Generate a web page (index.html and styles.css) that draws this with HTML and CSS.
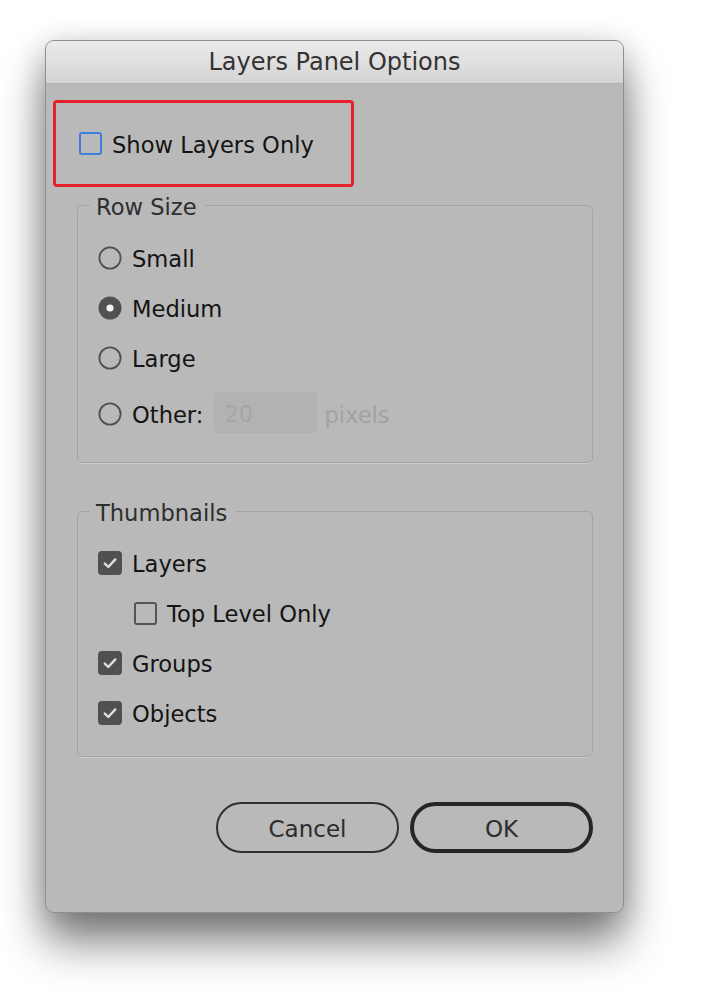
FILE: index.html
```html
<!DOCTYPE html>
<html>
<head>
<meta charset="utf-8">
<title>Layers Panel Options</title>
<link rel="stylesheet" href="styles.css">
</head>
<body>
<div class="dialog">
  <div class="titlebar">Layers Panel Options</div>
  <div class="content">
    <div class="highlight">
      <label class="option">
        <span class="box box-focus"></span>
        <span class="label">Show Layers Only</span>
      </label>
    </div>

    <div class="group group-rows">
      <div class="legend">Row Size</div>
      <div class="row">
        <svg class="radio" viewBox="0 0 24 24"><circle cx="12" cy="12" r="10.6" fill="none" stroke="#505050" stroke-width="1.8"/></svg>
        <span class="label">Small</span>
      </div>
      <div class="row">
        <svg class="radio" viewBox="0 0 24 24"><circle cx="12" cy="12" r="11.5" fill="#515151"/><circle cx="12" cy="12" r="3.6" fill="#f2f2f2"/></svg>
        <span class="label">Medium</span>
      </div>
      <div class="row">
        <svg class="radio" viewBox="0 0 24 24"><circle cx="12" cy="12" r="10.6" fill="none" stroke="#505050" stroke-width="1.8"/></svg>
        <span class="label">Large</span>
      </div>
      <div class="row row-other">
        <svg class="radio" viewBox="0 0 24 24"><circle cx="12" cy="12" r="10.6" fill="none" stroke="#505050" stroke-width="1.8"/></svg>
        <span class="label">Other:</span>
        <span class="field">20</span>
        <span class="unit">pixels</span>
      </div>
    </div>

    <div class="group group-thumbs">
      <div class="legend">Thumbnails</div>
      <div class="row">
        <svg class="check" viewBox="0 0 24 24"><rect x="0" y="0" width="24" height="24" rx="4" fill="#505050"/><path d="M6.8 12.6 L10.3 16 L17.3 8.4" fill="none" stroke="#dedede" stroke-width="2.4" stroke-linecap="round" stroke-linejoin="round"/></svg>
        <span class="label">Layers</span>
      </div>
      <div class="row row-indent">
        <span class="box"></span>
        <span class="label">Top Level Only</span>
      </div>
      <div class="row">
        <svg class="check" viewBox="0 0 24 24"><rect x="0" y="0" width="24" height="24" rx="4" fill="#505050"/><path d="M6.8 12.6 L10.3 16 L17.3 8.4" fill="none" stroke="#dedede" stroke-width="2.4" stroke-linecap="round" stroke-linejoin="round"/></svg>
        <span class="label">Groups</span>
      </div>
      <div class="row">
        <svg class="check" viewBox="0 0 24 24"><rect x="0" y="0" width="24" height="24" rx="4" fill="#505050"/><path d="M6.8 12.6 L10.3 16 L17.3 8.4" fill="none" stroke="#dedede" stroke-width="2.4" stroke-linecap="round" stroke-linejoin="round"/></svg>
        <span class="label">Objects</span>
      </div>
    </div>

    <div class="buttons">
      <button class="btn">Cancel</button>
      <button class="btn btn-default">OK</button>
    </div>
  </div>
</div>
</body>
</html>
```

FILE: styles.css
```css
* {
  box-sizing: border-box;
}

html, body {
  margin: 0;
  padding: 0;
}

body {
  width: 718px;
  height: 1004px;
  background: #ffffff;
  font-family: "DejaVu Sans", "Liberation Sans", sans-serif;
  overflow: hidden;
  padding-top: 40px;
  padding-left: 45px;
}

.dialog {
  width: 579px;
  height: 873px;
  background: #b9b9b9;
  border: 1px solid #8f8f8f;
  border-radius: 9px;
  overflow: hidden;
  box-shadow: 0 30px 45px rgba(0, 0, 0, 0.48), 0 6px 32px rgba(0, 0, 0, 0.2);
}

.titlebar {
  height: 43px;
  border-bottom: 1px solid #b4b4b4;
  background: linear-gradient(#ebebeb, #d4d4d4);
  display: flex;
  align-items: center;
  justify-content: center;
  font-size: 24px;
  color: #333333;
  padding-bottom: 1px;
}

.content {
  display: flex;
  flex-direction: column;
}

.highlight {
  margin: 16px 0 0 7px;
  width: 301px;
  height: 87px;
  border: 3px solid #e6212c;
  border-radius: 4px;
  display: flex;
  align-items: center;
  padding-left: 23px;
}

.option {
  display: flex;
  align-items: center;
}

.label {
  font-size: 22.6px;
  color: #141414;
  line-height: 26px;
  padding-top: 2px;
}

.box {
  width: 23px;
  height: 23px;
  border: 2px solid #555555;
  border-radius: 3px;
  margin-right: 10px;
  flex: none;
}

.box-focus {
  border-color: #3f7fdc;
}

.group {
  margin: 18px 30px 0 31px;
  border: 1px solid #a4a4a4;
  border-radius: 5px;
  box-shadow: 0 1px 0 rgba(255, 255, 255, 0.25);
  display: flex;
  flex-direction: column;
  padding-left: 20px;
}

.group-rows {
  padding-bottom: 17px;
}

.group-thumbs {
  margin-top: 48px;
  padding-bottom: 18px;
}

.legend {
  margin-top: -12px;
  margin-left: -8px;
  padding: 0 8px 0 6px;
  width: fit-content;
  background: #b9b9b9;
  font-size: 22.6px;
  line-height: 26px;
  height: 27px;
  color: #2e2e2e;
}

.group-rows .legend {
  margin-bottom: 12px;
}

.group-thumbs .legend {
  margin-bottom: 11px;
}

.row {
  height: 50px;
  display: flex;
  align-items: center;
}

.row-other {
  height: 62px;
}

.row-indent {
  padding-left: 36px;
}

.radio, .check {
  width: 24px;
  height: 24px;
  flex: none;
  margin-right: 10px;
}

.field {
  width: 103px;
  height: 41px;
  margin-left: 11px;
  margin-top: -3px;
  background: #b2b2b2;
  border-radius: 4px;
  font-size: 22.6px;
  color: #a6a6a6;
  display: flex;
  align-items: center;
  padding-left: 10px;
  padding-top: 2px;
}

.unit {
  margin-left: 7px;
  font-size: 22.6px;
  color: #a2a2a2;
  padding-top: 2px;
}

.buttons {
  margin: 45px 30px 0 0;
  display: flex;
  justify-content: flex-end;
  gap: 11px;
}

.btn {
  width: 183px;
  height: 51px;
  border: 2px solid #2f2f2f;
  border-radius: 26px;
  background: transparent;
  font-family: "DejaVu Sans", "Liberation Sans", sans-serif;
  font-size: 23px;
  color: #2c2c2c;
  padding: 2px 0 0 0;
}

.btn-default {
  border-width: 4px;
  border-color: #262626;
}
```
